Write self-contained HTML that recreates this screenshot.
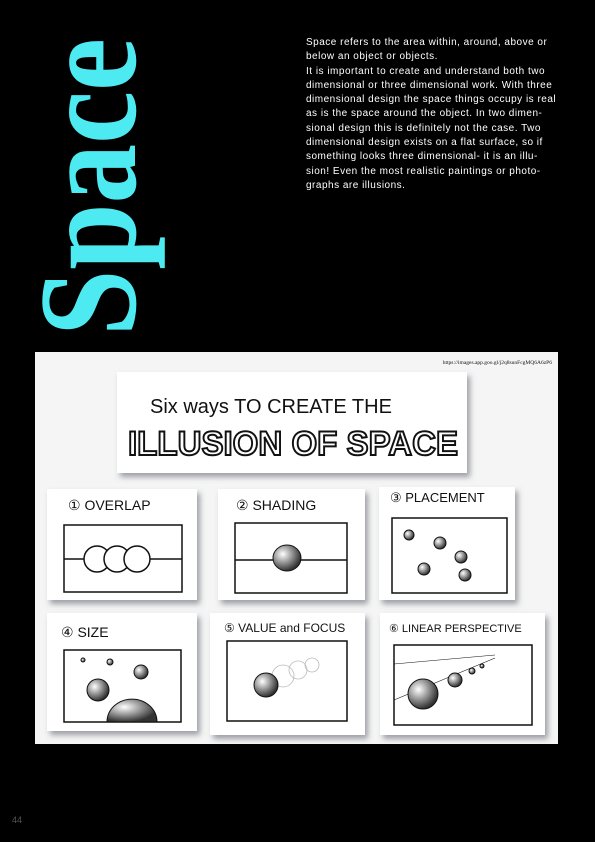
<!DOCTYPE html>
<html><head><meta charset="utf-8"><style>
html,body{margin:0;padding:0;background:#000;}
body{width:595px;height:842px;position:relative;overflow:hidden;font-family:"Liberation Sans",sans-serif;}
.txt{position:absolute;left:306px;top:36px;width:260px;color:#fff;font-size:10px;line-height:14.3px;letter-spacing:0.5px;white-space:nowrap;}
.pg{position:absolute;left:12px;top:815px;color:#555;font-size:9px;}
</style></head><body>
<svg width="595" height="842" style="position:absolute;left:0;top:0">
<text transform="translate(135,336) rotate(-90)" font-family="Liberation Serif" font-weight="bold" font-size="140" fill="#4eeaf2" textLength="298" lengthAdjust="spacingAndGlyphs">Space</text>
<rect x="35" y="352" width="523" height="392" fill="#f4f5f4"/>
<text x="552" y="364" font-family="Liberation Serif" font-size="5.5" text-anchor="end" fill="#111">https://images.app.goo.gl/j2q8sunFcgMQ6A6zP6</text>
<defs><filter id="s" x="-10%" y="-10%" width="125%" height="130%"><feDropShadow dx="3" dy="4" stdDeviation="3" flood-color="#556" flood-opacity="0.55"/></filter>
<radialGradient id="b" cx="35%" cy="35%" r="65%"><stop offset="0" stop-color="#fff"/><stop offset="1" stop-color="#333"/></radialGradient></defs>
<g filter="url(#s)" fill="#fff">
<rect x="117" y="372" width="350" height="101"/>
<rect x="47" y="489" width="150" height="111"/>
<rect x="218" y="489" width="147" height="111"/>
<rect x="379" y="487" width="136" height="113"/>
<rect x="47" y="613" width="150" height="118"/>
<rect x="210" y="613" width="155" height="122"/>
<rect x="380" y="613" width="165" height="122"/>
</g>
<g font-family="Liberation Sans" fill="#111">
<text x="150" y="413" font-size="20">Six ways TO CREATE THE</text>
<text x="128" y="455" font-size="34" font-weight="bold" fill="#fff" stroke="#111" stroke-width="2" textLength="330" lengthAdjust="spacingAndGlyphs">ILLUSION OF SPACE</text>
<text x="68" y="510" font-size="14">① OVERLAP</text>
<text x="236" y="510" font-size="14">② SHADING</text>
<text x="390" y="502" font-size="13">③ PLACEMENT</text>
<text x="61" y="637" font-size="14">④ SIZE</text>
<text x="224" y="632" font-size="12">⑤ VALUE and FOCUS</text>
<text x="389" y="632" font-size="11">⑥ LINEAR PERSPECTIVE</text>
</g>
<g fill="none" stroke="#111" stroke-width="1.5">
<rect x="64" y="525" width="118" height="67"/><line x1="64" y1="559" x2="182" y2="559"/>
<circle cx="97" cy="559" r="13" fill="#fff"/><circle cx="117" cy="559" r="13" fill="#fff"/><circle cx="137" cy="559" r="13" fill="#fff"/>
<rect x="235" y="523" width="112" height="70"/><line x1="235" y1="560" x2="347" y2="560"/>
<rect x="392" y="518" width="115" height="75"/>
<rect x="64" y="650" width="117" height="72"/>
<rect x="227" y="641" width="120" height="80"/>
<rect x="394" y="645" width="138" height="80"/>
<line x1="394" y1="664" x2="495" y2="655" stroke-width="0.6"/><line x1="394" y1="700" x2="495" y2="658" stroke-width="0.6"/>
</g>
<g fill="none" stroke="#bbb" stroke-width="0.8">
<circle cx="283" cy="676" r="11"/><circle cx="298" cy="670" r="9"/><circle cx="312" cy="665" r="7"/>
</g>
<g fill="url(#b)" stroke="#111" stroke-width="1">
<ellipse cx="287" cy="558" rx="14" ry="13"/>
<circle cx="409" cy="535" r="5"/><circle cx="440" cy="543" r="6"/><circle cx="461" cy="557" r="6"/><circle cx="424" cy="569" r="6"/><circle cx="465" cy="575" r="6"/>
<circle cx="83" cy="660" r="2"/><circle cx="110" cy="662" r="3"/><circle cx="141" cy="672" r="7"/><circle cx="98" cy="690" r="11"/>
<path d="M107,722 A24,22 0 0 1 157,722 Z"/>
<circle cx="266" cy="685" r="12"/>
<circle cx="423" cy="694" r="15"/><circle cx="455" cy="680" r="7"/><circle cx="472" cy="671" r="3"/><circle cx="482" cy="666" r="2"/>
</g>
</svg>
<div class="txt">Space refers to the area within, around, above or<br>below an object or objects.<br>It is important to create and understand both two<br>dimensional or three dimensional work. With three<br>dimensional design the space things occupy is real<br>as is the space around the object. In two dimen-<br>sional design this is definitely not the case. Two<br>dimensional design exists on a flat surface, so if<br>something looks three dimensional- it is an illu-<br>sion! Even the most realistic paintings or photo-<br>graphs are illusions.</div>
<div class="pg">44</div>
</body></html>
